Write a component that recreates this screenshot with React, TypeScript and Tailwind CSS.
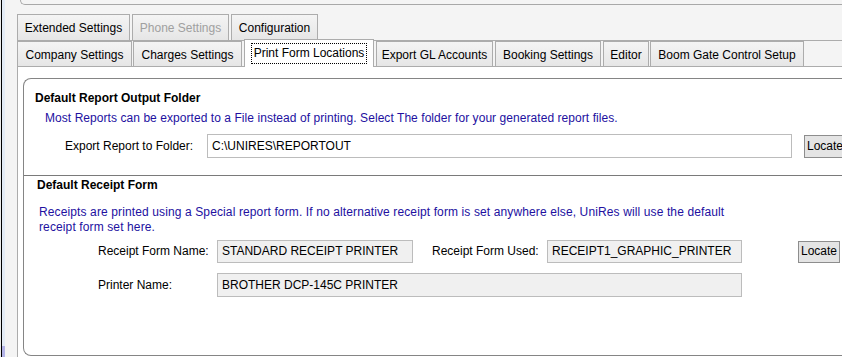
import React from "react";

const font = "font-['Liberation_Sans',Arial,sans-serif]";

const row1 = [
  { label: "Extended Settings", cls: "w-[113px]" },
  { label: "Phone Settings", cls: "ml-[2px] w-[97px] text-[#a0a0a0]" },
  { label: "Configuration", cls: "ml-[2px] w-[87px]" },
];

const row2 = [
  { label: "Company Settings", cls: "w-[115px]" },
  { label: "Charges Settings", cls: "ml-px w-[109px]" },
  { label: "Print Form Locations", cls: "ml-[2px] w-[130px]", active: true },
  { label: "Export GL Accounts", cls: "ml-[2px] w-[117px]" },
  { label: "Booking Settings", cls: "ml-[2px] w-[106px]" },
  { label: "Editor", cls: "ml-[2px] w-[46px]" },
  { label: "Boom Gate Control Setup", cls: "ml-px w-[154px]" },
];

function Tab({ label, cls, active }: { label: string; cls: string; active?: boolean }) {
  if (active) {
    return (
      <div className={`${cls} relative z-10 -mb-px flex h-[28px] shrink-0 items-start justify-center border border-b-0 border-[#acacac] bg-white pt-[3px]`}>
        <span className="border border-dotted border-black px-[2px] pt-[2px] pb-[3px] leading-[14px]">{label}</span>
      </div>
    );
  }
  return (
    <div className={`${cls} flex h-full shrink-0 items-center justify-center border border-b-0 border-[#acacac] bg-gradient-to-b from-[#f4f4f4] to-[#e6e6e6] pt-px leading-[14px]`}>
      {label}
    </div>
  );
}

function Field({ value, cls, ro }: { value: string; cls: string; ro?: boolean }) {
  return (
    <div className={`${cls} flex shrink-0 items-center border border-[#bcbcbc] pl-[4px] pb-px leading-[14px] ${ro ? "bg-[#f0f0f0]" : "bg-white"}`}>
      {value}
    </div>
  );
}

function Locate({ cls }: { cls: string }) {
  return (
    <button className={`${cls} flex shrink-0 items-center border border-[#8d8d8d] bg-[#e4e4e4] pl-[2px] pb-px leading-[14px] text-black`}>
      Locate
    </button>
  );
}

export default function App() {
  return (
    <div className={`${font} flex h-[357px] w-[842px] overflow-hidden bg-[#f4f4f4] text-[12px] text-black`}>
      {/* left window edge */}
      <div className="w-px bg-[#ececec]" />
      <div className="w-px bg-black" />
      <div className="flex w-[3px] flex-col bg-[#e4ecf6]">
        <div className="flex-1" />
        <div className="h-[11px] bg-[#b4b4e8]" />
      </div>

      <div className="flex min-w-0 flex-1 flex-col pl-[12px]">
        {/* bottom of the box above */}
        <div className="ml-[3px] h-[5px] w-[900px] rounded-bl-[6px] border-b border-l border-[#a8a8a8]" />

        {/* tabs */}
        <div className="mt-[9px] flex h-[26px]">
          {row1.map(t => <Tab key={t.label} {...t} />)}
        </div>
        <div className="flex h-[26px] items-end border-t border-[#acacac]">
          {row2.map(t => <Tab key={t.label} {...t} />)}
        </div>

        {/* tab page */}
        <div className="flex-1 border-l border-t border-[#acacac] bg-white pl-[5px] pt-[11px]">
          <div className="flex h-[278px] w-[860px] flex-col rounded-l-[8px] border-b border-l border-t border-[#858585]">
            {/* report output folder */}
            <section className="h-[96px] pl-[11px] pt-[12px]">
              <h2 className="font-bold leading-[14px]">Default Report Output Folder</h2>
              <p className="mt-[6px] pl-[10px] leading-[14px] tracking-[0.06px] text-[#22109f]">
                Most Reports can be exported to a File instead of printing. Select The folder for your generated report files.
              </p>
              <div className="mt-[9px] flex h-[24px] items-center pl-[30px]">
                <span className="w-[142px] shrink-0 pb-px leading-[14px]">Export Report to Folder:</span>
                <Field value="C:\UNIRES\REPORTOUT" cls="h-[24px] w-[585px]" />
                <Locate cls="ml-[12px] h-[23px] w-[42px]" />
              </div>
            </section>

            {/* receipt form */}
            <section className="flex-1 border-t border-[#7a7a7a] pl-[13px] pt-[2px]">
              <h2 className="font-bold leading-[14px]">Default Receipt Form</h2>
              <p className="mt-[13px] w-[705px] pl-[2px] leading-[15px] tracking-[0.12px] text-[#22109f]">
                Receipts are printed using a Special report form. If no alternative receipt form is set anywhere else, UniRes will use the default receipt form set here.
              </p>
              <div className="mt-[5px] flex h-[23px] items-center pl-[61px]">
                <span className="w-[119px] shrink-0 pb-px leading-[14px]">Receipt Form Name:</span>
                <Field value="STANDARD RECEIPT PRINTER" cls="h-[23px] w-[196px]" ro />
                <span className="ml-[19px] w-[115px] shrink-0 pb-px leading-[14px]">Receipt Form Used:</span>
                <Field value="RECEIPT1_GRAPHIC_PRINTER" cls="h-[23px] w-[195px]" ro />
                <Locate cls="ml-[56px] h-[22px] w-[42px]" />
              </div>
              <div className="mt-[10px] flex h-[24px] items-center pl-[61px]">
                <span className="w-[119px] shrink-0 pb-px leading-[14px]">Printer Name:</span>
                <Field value="BROTHER DCP-145C PRINTER" cls="h-[24px] w-[525px]" ro />
              </div>
            </section>
          </div>
        </div>
      </div>
    </div>
  );
}
